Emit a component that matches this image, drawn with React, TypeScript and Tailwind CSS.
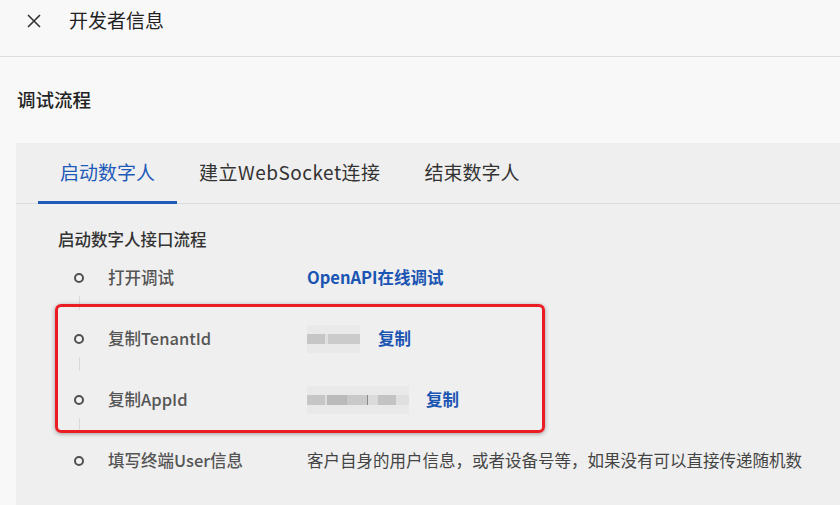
import React from "react";

const font = { fontFamily: '"Noto Sans CJK SC", "Noto Sans", sans-serif' };

function Blur({ blocks }: { blocks: { w: number; c: string }[] }) {
  return (
    <div className="flex flex-col">
      <div className="h-[9px] w-full bg-[#e9e9e9]" />
      <div className="flex h-[10px]">
        {blocks.map((b, i) => (
          <div key={i} className="h-full" style={{ width: b.w, background: b.c }} />
        ))}
      </div>
      <div className="h-[9px] w-full bg-[#e9e9e9]" />
    </div>
  );
}

function Row({
  label,
  children,
  line = true,
}: {
  label: string;
  children: React.ReactNode;
  line?: boolean;
}) {
  return (
    <div className="relative flex h-[61px] items-center">
      <div className="ml-[16px] h-[10px] w-[10px] rounded-full border-[2.5px] border-[#505050] bg-[#f3f3f3]" />
      {line && (
        <div className="absolute left-[21px] top-[calc(50%+18px)] h-[14px] w-px bg-[#d9d9d9]" />
      )}
      <div className="ml-[24px] w-[199px] text-[16.5px] font-medium text-[#555]">{label}</div>
      <div className="flex items-center">{children}</div>
    </div>
  );
}

export default function App() {
  return (
    <div
      className="relative h-[505px] w-[840px] overflow-hidden bg-[#f8f8f8]"
      style={font}
    >
      {/* header */}
      <div className="flex h-[57px] items-start border-b border-[#dcdcdc] pl-[27px] pt-[8px]">
        <svg width="14" height="14" viewBox="0 0 14 14" className="mt-[6px]">
          <path d="M1 1 L13 13 M13 1 L1 13" stroke="#333" strokeWidth="1.6" fill="none" />
        </svg>
        <div className="ml-[28px] text-[19px] leading-[24px] text-[#222]">开发者信息</div>
      </div>

      <div className="pl-[17px] pt-[29px] text-[18.5px] leading-[26px] font-medium text-[#222]">
        调试流程
      </div>

      {/* panel */}
      <div className="ml-[16px] mt-[31px] h-[400px] bg-[#efefef]">
        <div className="flex h-[61px] border-b border-[#dcdcdc] pl-[22px]">
          <div className="relative flex items-center px-[22px] text-[19px] text-[#1d5ab9]">
            <span className="-mt-[2px]">启动数字人</span>
            <div className="absolute bottom-[-1px] left-0 right-0 h-[3px] bg-[#1d5ab9]" />
          </div>
          <div className="flex items-center px-[22px] text-[19px] text-[#333]">
            <span className="-mt-[2px] tracking-[0.5px]">建立WebSocket连接</span>
          </div>
          <div className="flex items-center px-[22px] text-[19px] text-[#333]">
            <span className="-mt-[2px]">结束数字人</span>
          </div>
        </div>

        <div className="pl-[42px]">
          <div className="pt-[24px] text-[16.5px] leading-[22px] font-medium text-[#333]">
            启动数字人接口流程
          </div>
          <div className="-mt-[3px]">
            <Row label="打开调试">
              <span className="text-[16.5px] font-bold text-[#1b55b3]">OpenAPI在线调试</span>
            </Row>
            <Row label="复制TenantId">
              <div className="w-[53px]">
                <Blur
                  blocks={[
                    { w: 18, c: "#c6c6c6" },
                    { w: 3, c: "#e0e0e0" },
                    { w: 32, c: "#cbcbcb" },
                  ]}
                />
              </div>
              <span className="ml-[18px] text-[16.5px] font-bold text-[#1b55b3]">复制</span>
            </Row>
            <Row label="复制AppId">
              <div className="w-[102px]">
                <Blur
                  blocks={[
                    { w: 18, c: "#c6c6c6" },
                    { w: 2, c: "#e0e0e0" },
                    { w: 20, c: "#bababa" },
                    { w: 20, c: "#c9c9c9" },
                    { w: 1, c: "#888888" },
                    { w: 10, c: "#dadada" },
                    { w: 18, c: "#c3c3c3" },
                    { w: 13, c: "#e0e0e0" },
                  ]}
                />
              </div>
              <span className="ml-[17px] text-[16.5px] font-bold text-[#1b55b3]">复制</span>
            </Row>
            <Row label="填写终端User信息" line={false}>
              <span className="text-[16.5px] text-[#444]">
                客户自身的用户信息，或者设备号等，如果没有可以直接传递随机数
              </span>
            </Row>
          </div>
        </div>
      </div>

      {/* annotation box */}
      <div className="absolute left-[55px] top-[304px] h-[129px] w-[490px] rounded-[6px] border-[3px] border-[#ea1c24] shadow-[0_1px_4px_rgba(0,0,0,0.35)]" />
    </div>
  );
}
